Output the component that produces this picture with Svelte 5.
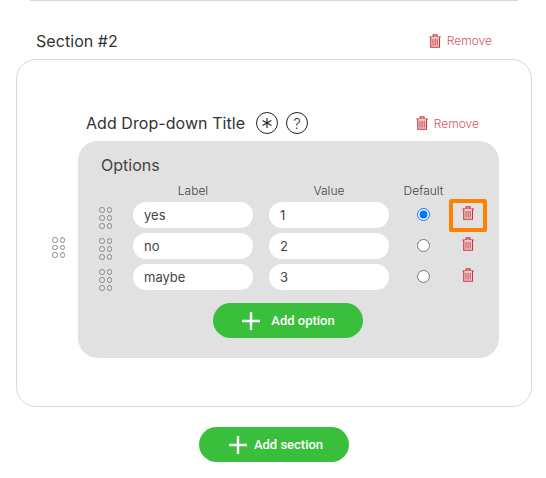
<script>
  const options = [
    { label: 'yes', value: '1', checked: true },
    { label: 'no', value: '2', checked: false },
    { label: 'maybe', value: '3', checked: false }
  ];
  const dots = [0, 1, 2, 3, 4, 5];
</script>

{#snippet trash()}
  <svg class="trash" width="12.25" height="14" viewBox="0 0 14 16" fill="none" stroke="#c9323a" stroke-width="1.2">
    <path d="M0.4 3.5h13.2M4.8 3.3V1h4.4v2.3" />
    <path d="M2 3.5v11.7h10V3.5" fill="#f0cfd0" />
    <path d="M4.6 5.5v7.8M7 5.5v7.8M9.4 5.5v7.8" stroke-width="1" />
  </svg>
{/snippet}

{#snippet grip(big)}
  <div class="grip" class:big>
    {#each dots as d (d)}<i></i>{/each}
  </div>
{/snippet}

{#snippet plus()}
  <svg width="18" height="18" viewBox="0 0 18 18" stroke="#fff" stroke-width="2.4">
    <path d="M9 0v18M0 9h18" />
  </svg>
{/snippet}

<div class="page">
  <div class="prev"></div>

  <div class="section-head">
    <h2>Section #2</h2>
    <span class="remove">{@render trash()} Remove</span>
  </div>

  <div class="card">
    <div class="side">{@render grip(false)}</div>
    <div class="body">
      <div class="title-row">
        <span class="title">Add Drop-down Title</span>
        <span class="circle">
          <svg width="12" height="12" viewBox="0 0 12 12" stroke="#222" stroke-width="1.1"><path d="M6 1v10M1.6 3.5l8.8 5M10.4 3.5l-8.8 5" /></svg>
        </span>
        <span class="circle q">?</span>
        <span class="remove">{@render trash()} Remove</span>
      </div>

      <div class="panel">
        <div class="options-title">Options</div>
        <div class="grid head">
          <span></span>
          <span>Label</span>
          <span class="value-col">Value</span>
          <span>Default</span>
          <span></span>
        </div>
        {#each options as opt, i}
          <div class="grid row">
            {@render grip(true)}
            <input type="text" value={opt.label} />
            <input class="value-col" type="text" value={opt.value} />
            <span class="radio-cell"><input type="radio" name="default" checked={opt.checked} /></span>
            <span class="trash-cell" class:marked={i === 0}>{@render trash()}</span>
          </div>
        {/each}
        <button class="add option">{@render plus()} Add option</button>
      </div>
    </div>
  </div>

  <button class="add section">{@render plus()} Add section</button>
</div>

<style>
  :global(body) {
    background: #fff;
  }
  .page {
    width: 546px;
    height: 478px;
    overflow: hidden;
    font-family: Inter, "Liberation Sans", sans-serif;
    color: #333;
    box-sizing: border-box;
    display: flex;
    flex-direction: column;
  }
  .prev {
    height: 1px;
    margin: 0 28px 0 30px;
    background: #d8d8d8;
  }
  .section-head {
    display: flex;
    justify-content: space-between;
    align-items: center;
    height: 22px;
    margin-top: 29px;
    padding: 0 54px 0 36px;
  }
  h2 {
    margin: 0;
    font-size: 16px;
    font-weight: 400;
    letter-spacing: 0.06px;
    color: #333;
  }
  .section-head .remove {
    margin-top: -1px;
  }
  .remove {
    display: flex;
    align-items: center;
    gap: 6px;
    font-size: 12px;
    font-weight: 300;
    color: #d4565d;
  }
  .card {
    margin: 7px 14px 0 16px;
    height: 348px;
    box-sizing: border-box;
    border: 1px solid #d8d8d8;
    border-radius: 20px;
    display: flex;
  }
  .side {
    width: 61px;
    padding: 177px 0 0 35px;
    box-sizing: border-box;
    flex: none;
  }
  .body {
    width: 421px;
    padding-top: 52px;
  }
  .title-row {
    display: flex;
    align-items: center;
    height: 22px;
    margin: 0 0 7px 8px;
    padding-right: 20px;
  }
  .title {
    font-size: 16px;
    letter-spacing: 0.06px;
    color: #333;
    margin-right: 11px;
  }
  .circle {
    width: 22px;
    height: 22px;
    box-sizing: border-box;
    border: 1px solid #222;
    border-radius: 50%;
    margin-right: 8px;
    display: flex;
    align-items: center;
    justify-content: center;
    font-size: 15px;
    font-weight: 300;
  }
  .title-row .remove {
    margin-left: auto;
  }
  .panel {
    background: #e1e1e1;
    border-radius: 20px;
    height: 217px;
    padding: 14px 0 0 21px;
    box-sizing: border-box;
    display: flex;
    flex-direction: column;
  }
  .options-title {
    font-size: 16px;
    line-height: 20px;
    margin-left: 2px;
    color: #444;
  }
  .grid {
    display: grid;
    grid-template-columns: 34px 120px 136px 69px 20px;
    align-items: center;
  }
  .value-col {
    margin-left: 16px;
  }
  .head {
    font-size: 12px;
    font-weight: 300;
    color: #444;
    height: 16px;
    margin-top: 7px;
    text-align: center;
  }
  .row {
    height: 26px;
    margin-top: 5px;
  }
  .head + .row {
    margin-top: 3px;
  }
  input[type="text"] {
    height: 26px;
    border: 0;
    border-radius: 13px;
    background: #fff;
    padding: 0 11px;
    box-sizing: border-box;
    width: 120px;
    font-family: inherit;
    font-size: 13px;
    color: #444;
    outline: 0;
  }
  .radio-cell {
    display: flex;
    justify-content: center;
  }
  input[type="radio"] {
    margin: 0;
    width: 13px;
    height: 13px;
  }
  .trash-cell {
    display: flex;
    justify-content: center;
    position: relative;
    padding-bottom: 4px;
  }
  .trash {
    display: block;
    flex: none;
  }
  .marked::after {
    content: "";
    position: absolute;
    left: -9px;
    top: -7px;
    width: 38px;
    height: 33px;
    box-sizing: border-box;
    border: 4px solid #ff8000;
    border-radius: 2px;
  }
  .grip {
    display: grid;
    grid-template-columns: 5.5px 5.5px;
    grid-auto-rows: 5.5px;
    gap: 2px;
    width: 14px;
  }
  .grip i {
    border: 1px solid #888;
    border-radius: 50%;
  }
  .big {
    gap: 2.5px 2.2px;
    margin-top: 6px;
  }
  .add {
    display: flex;
    align-items: center;
    justify-content: center;
    width: 150px;
    height: 35px;
    border: 0;
    border-radius: 18px;
    background: #3abf3c;
    color: #fff;
    font-family: Roboto, "Liberation Sans", sans-serif;
    font-size: 13px;
    font-weight: 500;
  }
  .option {
    gap: 11px;
    padding: 0 0 0 1px;
    margin: 14px 0 0 114px;
  }
  .section {
    gap: 7px;
    padding: 0 0 0 4px;
    margin: 20px 0 0 199px;
  }
</style>
